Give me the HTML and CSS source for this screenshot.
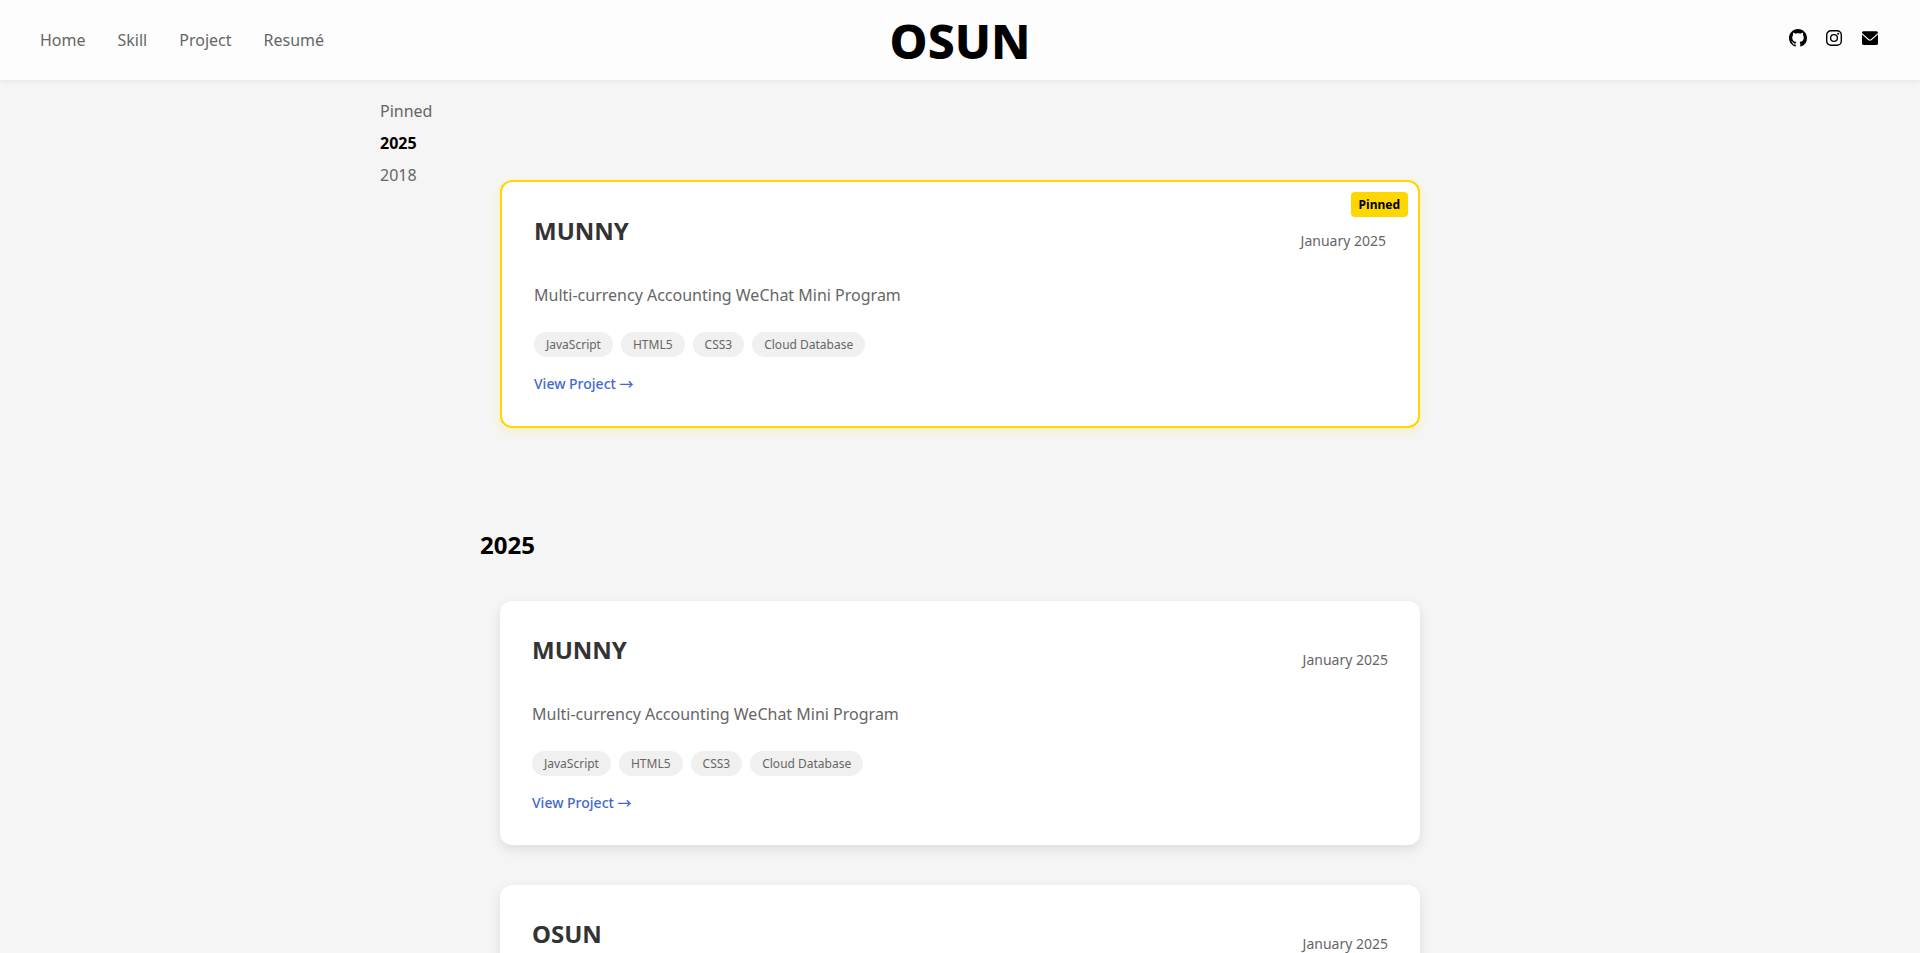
FILE: index.html
```html
<!DOCTYPE html>
<html lang="en">
<head>
<meta charset="utf-8">
<title>OSUN</title>
<link rel="stylesheet" href="styles.css">
</head>
<body>
<header class="site-header">
  <nav class="site-nav" aria-label="Main">
    <a href="#home">Home</a>
    <a href="#skill">Skill</a>
    <a href="#project">Project</a>
    <a href="#resume">Resumé</a>
  </nav>
  <a class="logo" href="#home">OSUN</a>
  <div class="social">
    <a href="#github" aria-label="GitHub"><svg viewBox="0 0 16 16"><path d="M8 0C3.58 0 0 3.58 0 8c0 3.54 2.29 6.53 5.47 7.59.4.07.55-.17.55-.38 0-.19-.01-.82-.01-1.49-2.01.37-2.53-.49-2.69-.94-.09-.23-.48-.94-.82-1.13-.28-.15-.68-.52-.01-.53.63-.01 1.08.58 1.23.82.72 1.21 1.87.87 2.33.66.07-.52.28-.87.51-1.07-1.78-.2-3.64-.89-3.64-3.95 0-.87.31-1.59.82-2.15-.08-.2-.36-1.02.08-2.12 0 0 .67-.21 2.2.82.64-.18 1.32-.27 2-.27s1.36.09 2 .27c1.53-1.04 2.2-.82 2.2-.82.44 1.1.16 1.92.08 2.12.51.56.82 1.27.82 2.15 0 3.07-1.87 3.75-3.65 3.95.29.25.54.73.54 1.48 0 1.07-.01 1.93-.01 2.2 0 .21.15.46.55.38A8.01 8.01 0 0 0 16 8c0-4.42-3.58-8-8-8z"/></svg></a>
    <a href="#instagram" aria-label="Instagram"><svg viewBox="0 0 18 18"><rect x="1.7" y="1.7" width="14.6" height="14.6" rx="4.2" fill="none" stroke="currentColor" stroke-width="1.4"/><circle cx="9" cy="9" r="3.4" fill="none" stroke="currentColor" stroke-width="1.4"/><circle cx="13.2" cy="4.8" r="1"/></svg></a>
    <a href="#email" aria-label="Email"><svg viewBox="0 0 18 18"><path d="M1 4Q1 2.200 2.400 2.200h13.200Q17 2.200 17 4L10.200 9.900Q9 10.900 7.800 9.900z"/><path d="M1 5.400l6.200 5.600Q9 12.400 10.800 11L17 5.400V14.600Q17 16 15.600 16H2.400Q1 16 1 14.600z"/></svg></a>
  </div>
</header>

<div class="layout">
  <aside class="timeline">
    <a href="#pinned">Pinned</a>
    <a class="active" href="#y2025">2025</a>
    <a href="#y2018">2018</a>
  </aside>

  <main class="projects">
    <section class="group" id="pinned">
      <article class="card card-pinned">
        <span class="badge">Pinned</span>
        <div class="card-head">
          <h3>MUNNY</h3>
          <time datetime="2025-01">January 2025</time>
        </div>
        <p class="summary">Multi-currency Accounting WeChat Mini Program</p>
        <ul class="tags">
          <li>JavaScript</li>
          <li>HTML5</li>
          <li>CSS3</li>
          <li>Cloud Database</li>
        </ul>
        <a class="more" href="#munny">View Project <span class="arrow">→</span></a>
      </article>
    </section>

    <section class="group" id="y2025">
      <h2>2025</h2>
      <article class="card">
        <div class="card-head">
          <h3>MUNNY</h3>
          <time datetime="2025-01">January 2025</time>
        </div>
        <p class="summary">Multi-currency Accounting WeChat Mini Program</p>
        <ul class="tags">
          <li>JavaScript</li>
          <li>HTML5</li>
          <li>CSS3</li>
          <li>Cloud Database</li>
        </ul>
        <a class="more" href="#munny">View Project <span class="arrow">→</span></a>
      </article>
      <article class="card">
        <div class="card-head">
          <h3>OSUN</h3>
          <time datetime="2025-01">January 2025</time>
        </div>
      </article>
    </section>
  </main>
</div>
</body>
</html>
```
FILE: styles.css
```css
* {
  box-sizing: border-box;
}

html {
  scrollbar-width: none;
}

body {
  margin: 0;
  background: #f5f5f5;
  color: #000;
  font: 16px/22px "Noto Sans", sans-serif;
}

a {
  color: inherit;
  text-decoration: none;
}

.site-header {
  position: sticky;
  top: 0;
  z-index: 10;
  display: grid;
  grid-template-columns: 1fr auto 1fr;
  align-items: center;
  height: 80px;
  padding: 0 40px;
  background: #fdfdfd;
  box-shadow: 0 2px 5px rgba(0, 0, 0, 0.05);
}

.site-nav {
  display: flex;
  gap: 32px;
  color: #666;
}

.logo {
  padding-top: 2px;
  font-size: 48px;
  font-weight: 800;
  line-height: 66px;
}

.social {
  display: flex;
  justify-content: flex-end;
  gap: 18px;
  padding: 0 1px 4px 0;
}

.social a {
  display: flex;
}

.social svg {
  width: 18px;
  height: 18px;
  fill: currentColor;
}

.layout {
  display: grid;
  grid-template-columns: 1fr minmax(0, 960px) 1fr;
}

.timeline {
  position: sticky;
  top: 100px;
  display: flex;
  flex-direction: column;
  align-self: start;
  justify-self: end;
  gap: 10px;
  width: 100px;
  margin-top: 20px;
  color: #666;
}

.timeline .active {
  color: #000;
  font-weight: 700;
}

.projects {
  padding-top: 100px;
}

.group {
  margin-bottom: 100px;
}

h2 {
  margin: 0 0 40px;
  font-size: 24px;
  line-height: 33px;
}

.card {
  position: relative;
  margin: 0 20px 40px;
  padding: 32px;
  border-radius: 12px;
  background: #fff;
  box-shadow: 0 4px 12px rgba(0, 0, 0, 0.1);
}

.card:last-child {
  margin-bottom: 0;
}

.card-pinned {
  border: 2px solid #ffd700;
  box-shadow: 0 4px 12px rgba(255, 215, 0, 0.2);
}

.badge {
  position: absolute;
  top: 10px;
  right: 10px;
  padding: 4px 8px;
  border-radius: 4px;
  background: #ffd700;
  font-size: 12px;
  font-weight: 700;
  line-height: 17px;
}

.card-head {
  display: flex;
  align-items: center;
  justify-content: space-between;
  margin-bottom: 16px;
}

h3 {
  margin: 0 0 20px;
  color: #333;
  font-size: 24px;
  line-height: 33px;
}

time {
  color: #666;
  font-size: 14px;
  line-height: 19px;
}

.summary {
  margin: 0 0 25px;
  color: #666;
  line-height: 24px;
}

.tags {
  display: flex;
  flex-wrap: wrap;
  gap: 8px;
  margin: 0 0 16px;
  padding: 0;
  list-style: none;
}

.tags li {
  padding: 4px 12px;
  border-radius: 16px;
  background: #f0f0f0;
  color: #666;
  font-size: 12px;
  line-height: 17px;
}

.more {
  display: block;
  width: fit-content;
  color: #4169d1;
  font-size: 14px;
  font-weight: 500;
  line-height: 21px;
}

.arrow {
  font-family: "Noto Sans CJK SC", sans-serif;
  line-height: 1;
}
```
